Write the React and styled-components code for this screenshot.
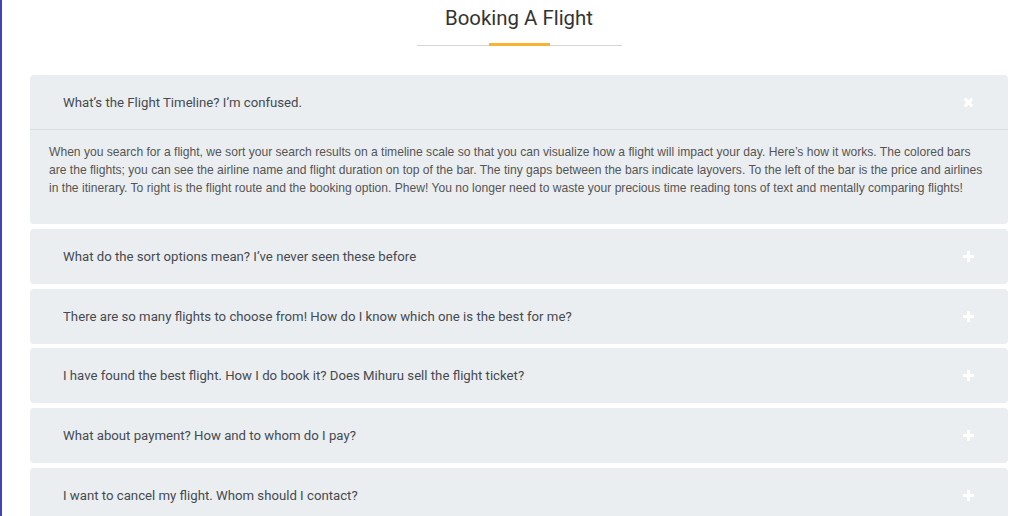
import React, { useState } from "react";
import styled, { createGlobalStyle } from "styled-components";

const GlobalStyle = createGlobalStyle`
  html, body {
    margin: 0;
    padding: 0;
    background: #fff;
    font-family: Roboto, "Liberation Sans", Arial, sans-serif;
  }
`;

const faqs = [
  {
    q: "What’s the Flight Timeline? I’m confused.",
    a: "When you search for a flight, we sort your search results on a timeline scale so that you can visualize how a flight will impact your day. Here’s how it works. The colored bars are the flights; you can see the airline name and flight duration on top of the bar. The tiny gaps between the bars indicate layovers. To the left of the bar is the price and airlines in the itinerary. To right is the flight route and the booking option. Phew! You no longer need to waste your precious time reading tons of text and mentally comparing flights!",
  },
  { q: "What do the sort options mean? I’ve never seen these before", a: "" },
  { q: "There are so many flights to choose from! How do I know which one is the best for me?", a: "" },
  { q: "I have found the best flight. How I do book it? Does Mihuru sell the flight ticket?", a: "" },
  { q: "What about payment? How and to whom do I pay?", a: "" },
  { q: "I want to cancel my flight. Whom should I contact?", a: "" },
];

const Icon = ({ open }) => (
  <svg width="11" height="11" viewBox="0 0 11 11" style={{ transform: open ? "rotate(45deg)" : "none" }}>
    <rect x="4" y="0" width="3" height="11" fill="#fff" />
    <rect x="0" y="4" width="11" height="3" fill="#fff" />
  </svg>
);

const App = () => {
  const [open, setOpen] = useState(0);

  return (
    <Page>
      <GlobalStyle />
      <Section>
        <Title>Booking A Flight</Title>
        <Divider>
          <Accent />
        </Divider>
        <List>
          {faqs.map((item, i) => (
            <Card key={i}>
              <Header $open={open === i} onClick={() => setOpen(open === i ? -1 : i)}>
                <Question>{item.q}</Question>
                <Icon open={open === i} />
              </Header>
              {open === i && <Answer>{item.a}</Answer>}
            </Card>
          ))}
        </List>
      </Section>
    </Page>
  );
};

export default App;

const Page = styled.div`
  min-height: 516px;
  border-left: 2px solid #4343b8;
  box-sizing: border-box;
  padding: 0 16px 0 28px;
  overflow: hidden;
`;

const Section = styled.div`
  display: flex;
  flex-direction: column;
  align-items: center;
`;

const Title = styled.h2`
  margin: 5px 0 0;
  font-size: 20.4px;
  font-weight: 400;
  line-height: 26px;
  color: #333;
`;

const Divider = styled.div`
  margin-top: 14px;
  width: 205px;
  height: 1px;
  background: #d6d6d6;
  display: flex;
  justify-content: center;
  align-items: center;
`;

const Accent = styled.div`
  width: 61px;
  height: 3px;
  background: #f8b335;
  margin-top: -2px;
`;

const List = styled.div`
  margin-top: 29px;
  width: 100%;
  display: flex;
  flex-direction: column;
  gap: 4.8px;
`;

const Card = styled.div`
  background: #ebeef0;
  border-radius: 4px;
`;

const Header = styled.div`
  height: 55px;
  box-sizing: border-box;
  display: flex;
  align-items: center;
  justify-content: space-between;
  padding: 0 34px 0 33px;
  cursor: pointer;
  border-bottom: ${(p) => (p.$open ? "1px solid #dadcde" : "none")};
`;

const Question = styled.span`
  font-size: 13.2px;
  font-weight: 400;
  color: #454a50;
`;

const Answer = styled.p`
  margin: 0;
  padding: 13px 19px 27px 19px;
  font-family: "Liberation Sans", Arial, sans-serif;
  font-size: 12.1px;
  line-height: 18px;
  color: #555;
`;
